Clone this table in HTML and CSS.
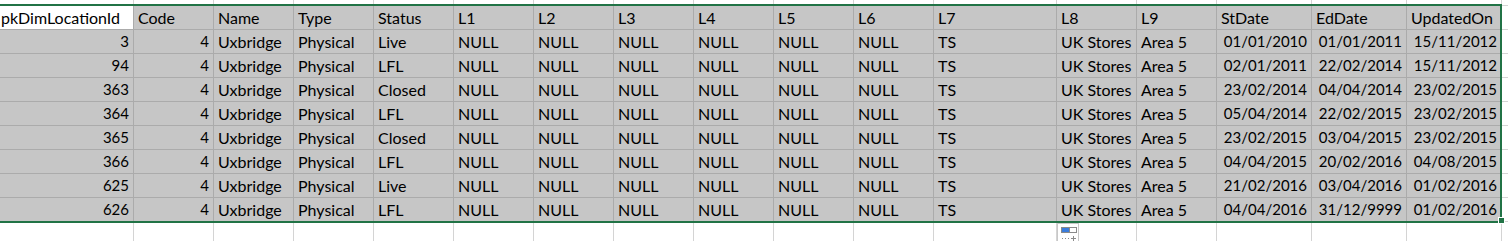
FILE: index.html
```html
<!DOCTYPE html>
<html>
<head>
<meta charset="utf-8">
<link rel="stylesheet" href="styles.css">
</head>
<body>
<div class="sheet">
  <div class="grid">
    <div class="c"></div><div class="c"></div><div class="c"></div><div class="c"></div><div class="c"></div><div class="c"></div><div class="c"></div><div class="c"></div><div class="c"></div><div class="c"></div><div class="c"></div><div class="c"></div><div class="c"></div><div class="c"></div><div class="c"></div><div class="c"></div><div class="c"></div><div class="c"></div>

    <div class="c active">pkDimLocationId</div><div class="c s">Code</div><div class="c s">Name</div><div class="c s">Type</div><div class="c s">Status</div><div class="c s">L1</div><div class="c s">L2</div><div class="c s">L3</div><div class="c s">L4</div><div class="c s">L5</div><div class="c s">L6</div><div class="c s">L7</div><div class="c s">L8</div><div class="c s">L9</div><div class="c s">StDate</div><div class="c s">EdDate</div><div class="c s">UpdatedOn</div><div class="c"></div>

    <div class="c s r">3</div><div class="c s r">4</div><div class="c s">Uxbridge</div><div class="c s">Physical</div><div class="c s">Live</div><div class="c s">NULL</div><div class="c s">NULL</div><div class="c s">NULL</div><div class="c s">NULL</div><div class="c s">NULL</div><div class="c s">NULL</div><div class="c s">TS</div><div class="c s">UK Stores</div><div class="c s">Area 5</div><div class="c s r">01/01/2010</div><div class="c s r">01/01/2011</div><div class="c s r">15/11/2012</div><div class="c"></div>

    <div class="c s r">94</div><div class="c s r">4</div><div class="c s">Uxbridge</div><div class="c s">Physical</div><div class="c s">LFL</div><div class="c s">NULL</div><div class="c s">NULL</div><div class="c s">NULL</div><div class="c s">NULL</div><div class="c s">NULL</div><div class="c s">NULL</div><div class="c s">TS</div><div class="c s">UK Stores</div><div class="c s">Area 5</div><div class="c s r">02/01/2011</div><div class="c s r">22/02/2014</div><div class="c s r">15/11/2012</div><div class="c"></div>

    <div class="c s r">363</div><div class="c s r">4</div><div class="c s">Uxbridge</div><div class="c s">Physical</div><div class="c s">Closed</div><div class="c s">NULL</div><div class="c s">NULL</div><div class="c s">NULL</div><div class="c s">NULL</div><div class="c s">NULL</div><div class="c s">NULL</div><div class="c s">TS</div><div class="c s">UK Stores</div><div class="c s">Area 5</div><div class="c s r">23/02/2014</div><div class="c s r">04/04/2014</div><div class="c s r">23/02/2015</div><div class="c"></div>

    <div class="c s r">364</div><div class="c s r">4</div><div class="c s">Uxbridge</div><div class="c s">Physical</div><div class="c s">LFL</div><div class="c s">NULL</div><div class="c s">NULL</div><div class="c s">NULL</div><div class="c s">NULL</div><div class="c s">NULL</div><div class="c s">NULL</div><div class="c s">TS</div><div class="c s">UK Stores</div><div class="c s">Area 5</div><div class="c s r">05/04/2014</div><div class="c s r">22/02/2015</div><div class="c s r">23/02/2015</div><div class="c"></div>

    <div class="c s r">365</div><div class="c s r">4</div><div class="c s">Uxbridge</div><div class="c s">Physical</div><div class="c s">Closed</div><div class="c s">NULL</div><div class="c s">NULL</div><div class="c s">NULL</div><div class="c s">NULL</div><div class="c s">NULL</div><div class="c s">NULL</div><div class="c s">TS</div><div class="c s">UK Stores</div><div class="c s">Area 5</div><div class="c s r">23/02/2015</div><div class="c s r">03/04/2015</div><div class="c s r">23/02/2015</div><div class="c"></div>

    <div class="c s r">366</div><div class="c s r">4</div><div class="c s">Uxbridge</div><div class="c s">Physical</div><div class="c s">LFL</div><div class="c s">NULL</div><div class="c s">NULL</div><div class="c s">NULL</div><div class="c s">NULL</div><div class="c s">NULL</div><div class="c s">NULL</div><div class="c s">TS</div><div class="c s">UK Stores</div><div class="c s">Area 5</div><div class="c s r">04/04/2015</div><div class="c s r">20/02/2016</div><div class="c s r">04/08/2015</div><div class="c"></div>

    <div class="c s r">625</div><div class="c s r">4</div><div class="c s">Uxbridge</div><div class="c s">Physical</div><div class="c s">Live</div><div class="c s">NULL</div><div class="c s">NULL</div><div class="c s">NULL</div><div class="c s">NULL</div><div class="c s">NULL</div><div class="c s">NULL</div><div class="c s">TS</div><div class="c s">UK Stores</div><div class="c s">Area 5</div><div class="c s r">21/02/2016</div><div class="c s r">03/04/2016</div><div class="c s r">01/02/2016</div><div class="c"></div>

    <div class="c s r">626</div><div class="c s r">4</div><div class="c s">Uxbridge</div><div class="c s">Physical</div><div class="c s">LFL</div><div class="c s">NULL</div><div class="c s">NULL</div><div class="c s">NULL</div><div class="c s">NULL</div><div class="c s">NULL</div><div class="c s">NULL</div><div class="c s">TS</div><div class="c s">UK Stores</div><div class="c s">Area 5</div><div class="c s r">04/04/2016</div><div class="c s r">31/12/9999</div><div class="c s r">01/02/2016</div><div class="c"></div>

    <div class="c"></div><div class="c"></div><div class="c"></div><div class="c"></div><div class="c"></div><div class="c"></div><div class="c"></div><div class="c"></div><div class="c"></div><div class="c"></div><div class="c"></div><div class="c"></div><div class="c"></div><div class="c"></div><div class="c"></div><div class="c"></div><div class="c"></div><div class="c"></div>
  </div>

  <div class="selection"></div>
  <div class="handle"></div>
  <div class="quick">
    <svg width="20" height="18" viewBox="0 0 20 18">
      <rect x="3" y="3" width="8" height="6" fill="#3b7ddd"/>
      <rect x="11.5" y="3.5" width="7" height="5" fill="#fff" stroke="#8a8a8a"/>
      <rect x="3.5" y="3.5" width="15" height="5" fill="none" stroke="#8a8a8a"/>
      <path d="M4 14.5h1M7 14.5h1M10 14.5h1" stroke="#8a8a8a"/>
      <path d="M13 14.5h5M15.5 12v5" stroke="#8a8a8a"/>
    </svg>
  </div>
</div>
</body>
</html>
```

FILE: styles.css
```css
html, body {
  margin: 0;
  padding: 0;
  background: #ffffff;
  overflow: hidden;
}

.sheet {
  position: relative;
  width: 1508px;
  height: 241px;
  overflow: hidden;
  font-family: "Lato", "Liberation Sans", sans-serif;
  font-size: 16px;
  color: #000000;
}

.grid {
  display: grid;
  grid-template-columns: 134px repeat(10, 80px) 123px 80px 80px 95px 95px 95px 40px;
  grid-template-rows: 6px repeat(10, 24px);
}

.c {
  box-sizing: border-box;
  border-right: 1px solid #d4d4d4;
  border-bottom: 1px solid #d4d4d4;
  padding: 0 3px 3px 4px;
  white-space: nowrap;
  overflow: hidden;
  display: flex;
  align-items: flex-end;
  line-height: 17px;
}

.s {
  background: #c6c6c6;
  border-right-color: #ababab;
  border-bottom-color: #ababab;
}

.active {
  background: #ffffff;
  border-right-color: #ababab;
  border-bottom-color: #ababab;
  padding-left: 1px;
}

.r {
  justify-content: flex-end;
  padding-right: 4px;
  font-size: 15px;
}

.selection {
  position: absolute;
  left: -2px;
  top: 4px;
  width: 1504px;
  height: 219px;
  box-sizing: border-box;
  border: 2px solid #217346;
  pointer-events: none;
}

.handle {
  position: absolute;
  left: 1498px;
  top: 217px;
  width: 7px;
  height: 7px;
  box-sizing: border-box;
  background: #217346;
  border: 1px solid #ffffff;
}

.quick {
  position: absolute;
  left: 1057px;
  top: 223px;
  width: 22px;
  height: 20px;
  box-sizing: border-box;
  border: 1px solid #c8c8c8;
  background: #ffffff;
  display: flex;
}
```
